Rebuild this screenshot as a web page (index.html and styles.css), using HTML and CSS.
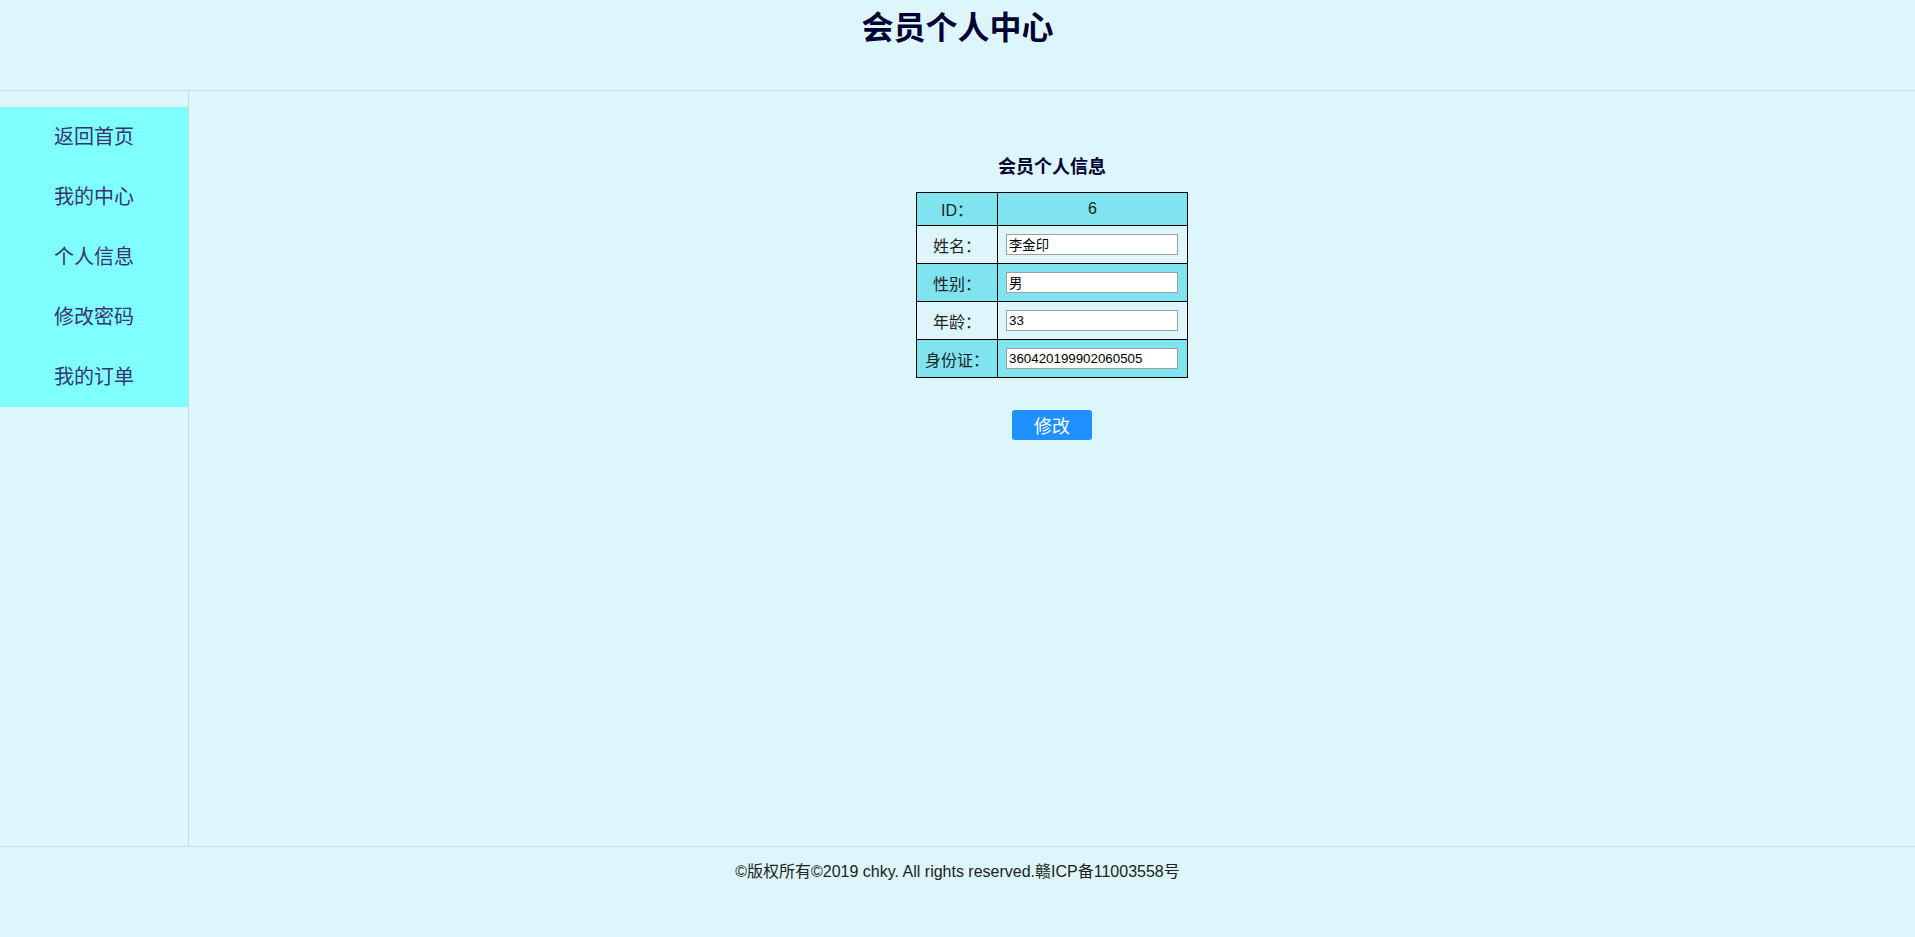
FILE: index.html
```html
<!DOCTYPE html>
<html lang="zh-CN">
<head>
<meta charset="utf-8">
<title>会员个人中心</title>
<link rel="stylesheet" href="styles.css">
</head>
<body>
<header class="top">
  <h1 class="top-title">会员个人中心</h1>
</header>
<div class="layout">
  <aside class="sidebar">
    <ul class="menu">
      <li class="menu-item"><a href="#">返回首页</a></li>
      <li class="menu-item"><a href="#">我的中心</a></li>
      <li class="menu-item"><a href="#">个人信息</a></li>
      <li class="menu-item"><a href="#">修改密码</a></li>
      <li class="menu-item"><a href="#">我的订单</a></li>
    </ul>
  </aside>
  <main class="main">
    <h2 class="info-title">会员个人信息</h2>
    <form class="info-form">
      <table class="info-table">
        <tr class="row-hl row-id">
          <td class="label">ID：</td>
          <td class="value center">6</td>
        </tr>
        <tr>
          <td class="label">姓名：</td>
          <td class="value"><input class="field" type="text" value="李金印"></td>
        </tr>
        <tr class="row-hl">
          <td class="label">性别：</td>
          <td class="value"><input class="field" type="text" value="男"></td>
        </tr>
        <tr>
          <td class="label">年龄：</td>
          <td class="value"><input class="field" type="text" value="33"></td>
        </tr>
        <tr class="row-hl">
          <td class="label">身份证：</td>
          <td class="value"><input class="field" type="text" value="360420199902060505"></td>
        </tr>
      </table>
      <button class="btn" type="button">修改</button>
    </form>
  </main>
</div>
<footer class="footer">
  <p class="copy">©版权所有©2019 chky. All rights reserved.赣ICP备11003558号</p>
</footer>
</body>
</html>
```

FILE: styles.css
```css
html, body {
  margin: 0;
  padding: 0;
}
body {
  background: #dcf6fb;
  font-family: "Liberation Sans", "Noto Sans CJK SC", sans-serif;
  color: #222;
  width: 1915px;
}
.top {
  height: 90px;
  border-bottom: 1px solid #c3dde3;
  text-align: center;
}
.top-title {
  margin: 0;
  padding-top: 7px;
  font-size: 32px;
  line-height: 42px;
  font-weight: bold;
  color: #000033;
}
.layout {
  display: flex;
  height: 755px;
  border-bottom: 1px solid #c3dde3;
}
.sidebar {
  width: 188px;
  border-right: 1px solid #c3dde3;
  padding-top: 16px;
}
.menu {
  list-style: none;
  margin: 0;
  padding: 0;
  background: #80ffff;
}
.menu-item {
  height: 60px;
  line-height: 60px;
  text-align: center;
  font-size: 20px;
}
.menu-item a {
  color: #353570;
  text-decoration: none;
}
.main {
  flex: 1;
  display: flex;
  flex-direction: column;
  align-items: center;
}
.info-title {
  margin: 63px 0 0;
  font-size: 18px;
  line-height: 26px;
  color: #000033;
  font-weight: bold;
}
.info-form {
  display: flex;
  flex-direction: column;
  align-items: center;
  margin-top: 12px;
}
.info-table {
  border-collapse: collapse;
  border: 1px solid #000;
  width: 272px;
  font-size: 16px;
  color: #222;
}
.info-table td {
  border: 1px solid #000;
  padding: 0 7px;
  height: 37px;
}
.info-table .row-id td {
  height: 32px;
}
.row-hl {
  background: #7fe3f0;
}
.info-table .label {
  width: 72px;
  text-align: center;
  padding: 0 4px;
}
.center {
  text-align: center;
}
.field {
  box-sizing: border-box;
  width: 172px;
  height: 21px;
  margin: 0 0 0 1px;
  padding: 1px 2px;
  border: 1px solid #a0a0a0;
  background: #fff;
  font-family: "Liberation Sans", "Noto Sans CJK SC", sans-serif;
  font-size: 13.33px;
  color: #000;
  vertical-align: middle;
}
.btn {
  margin-top: 32px;
  width: 80px;
  height: 30px;
  border: none;
  border-radius: 3px;
  background: #1e90ff;
  color: #fff;
  font-size: 18px;
  font-family: "Liberation Sans", "Noto Sans CJK SC", sans-serif;
  padding: 0;
  cursor: pointer;
}
.footer {
  height: 90px;
  text-align: center;
}
.copy {
  margin: 0;
  padding-top: 15px;
  font-size: 16px;
  line-height: 20px;
  color: #222;
}
```
